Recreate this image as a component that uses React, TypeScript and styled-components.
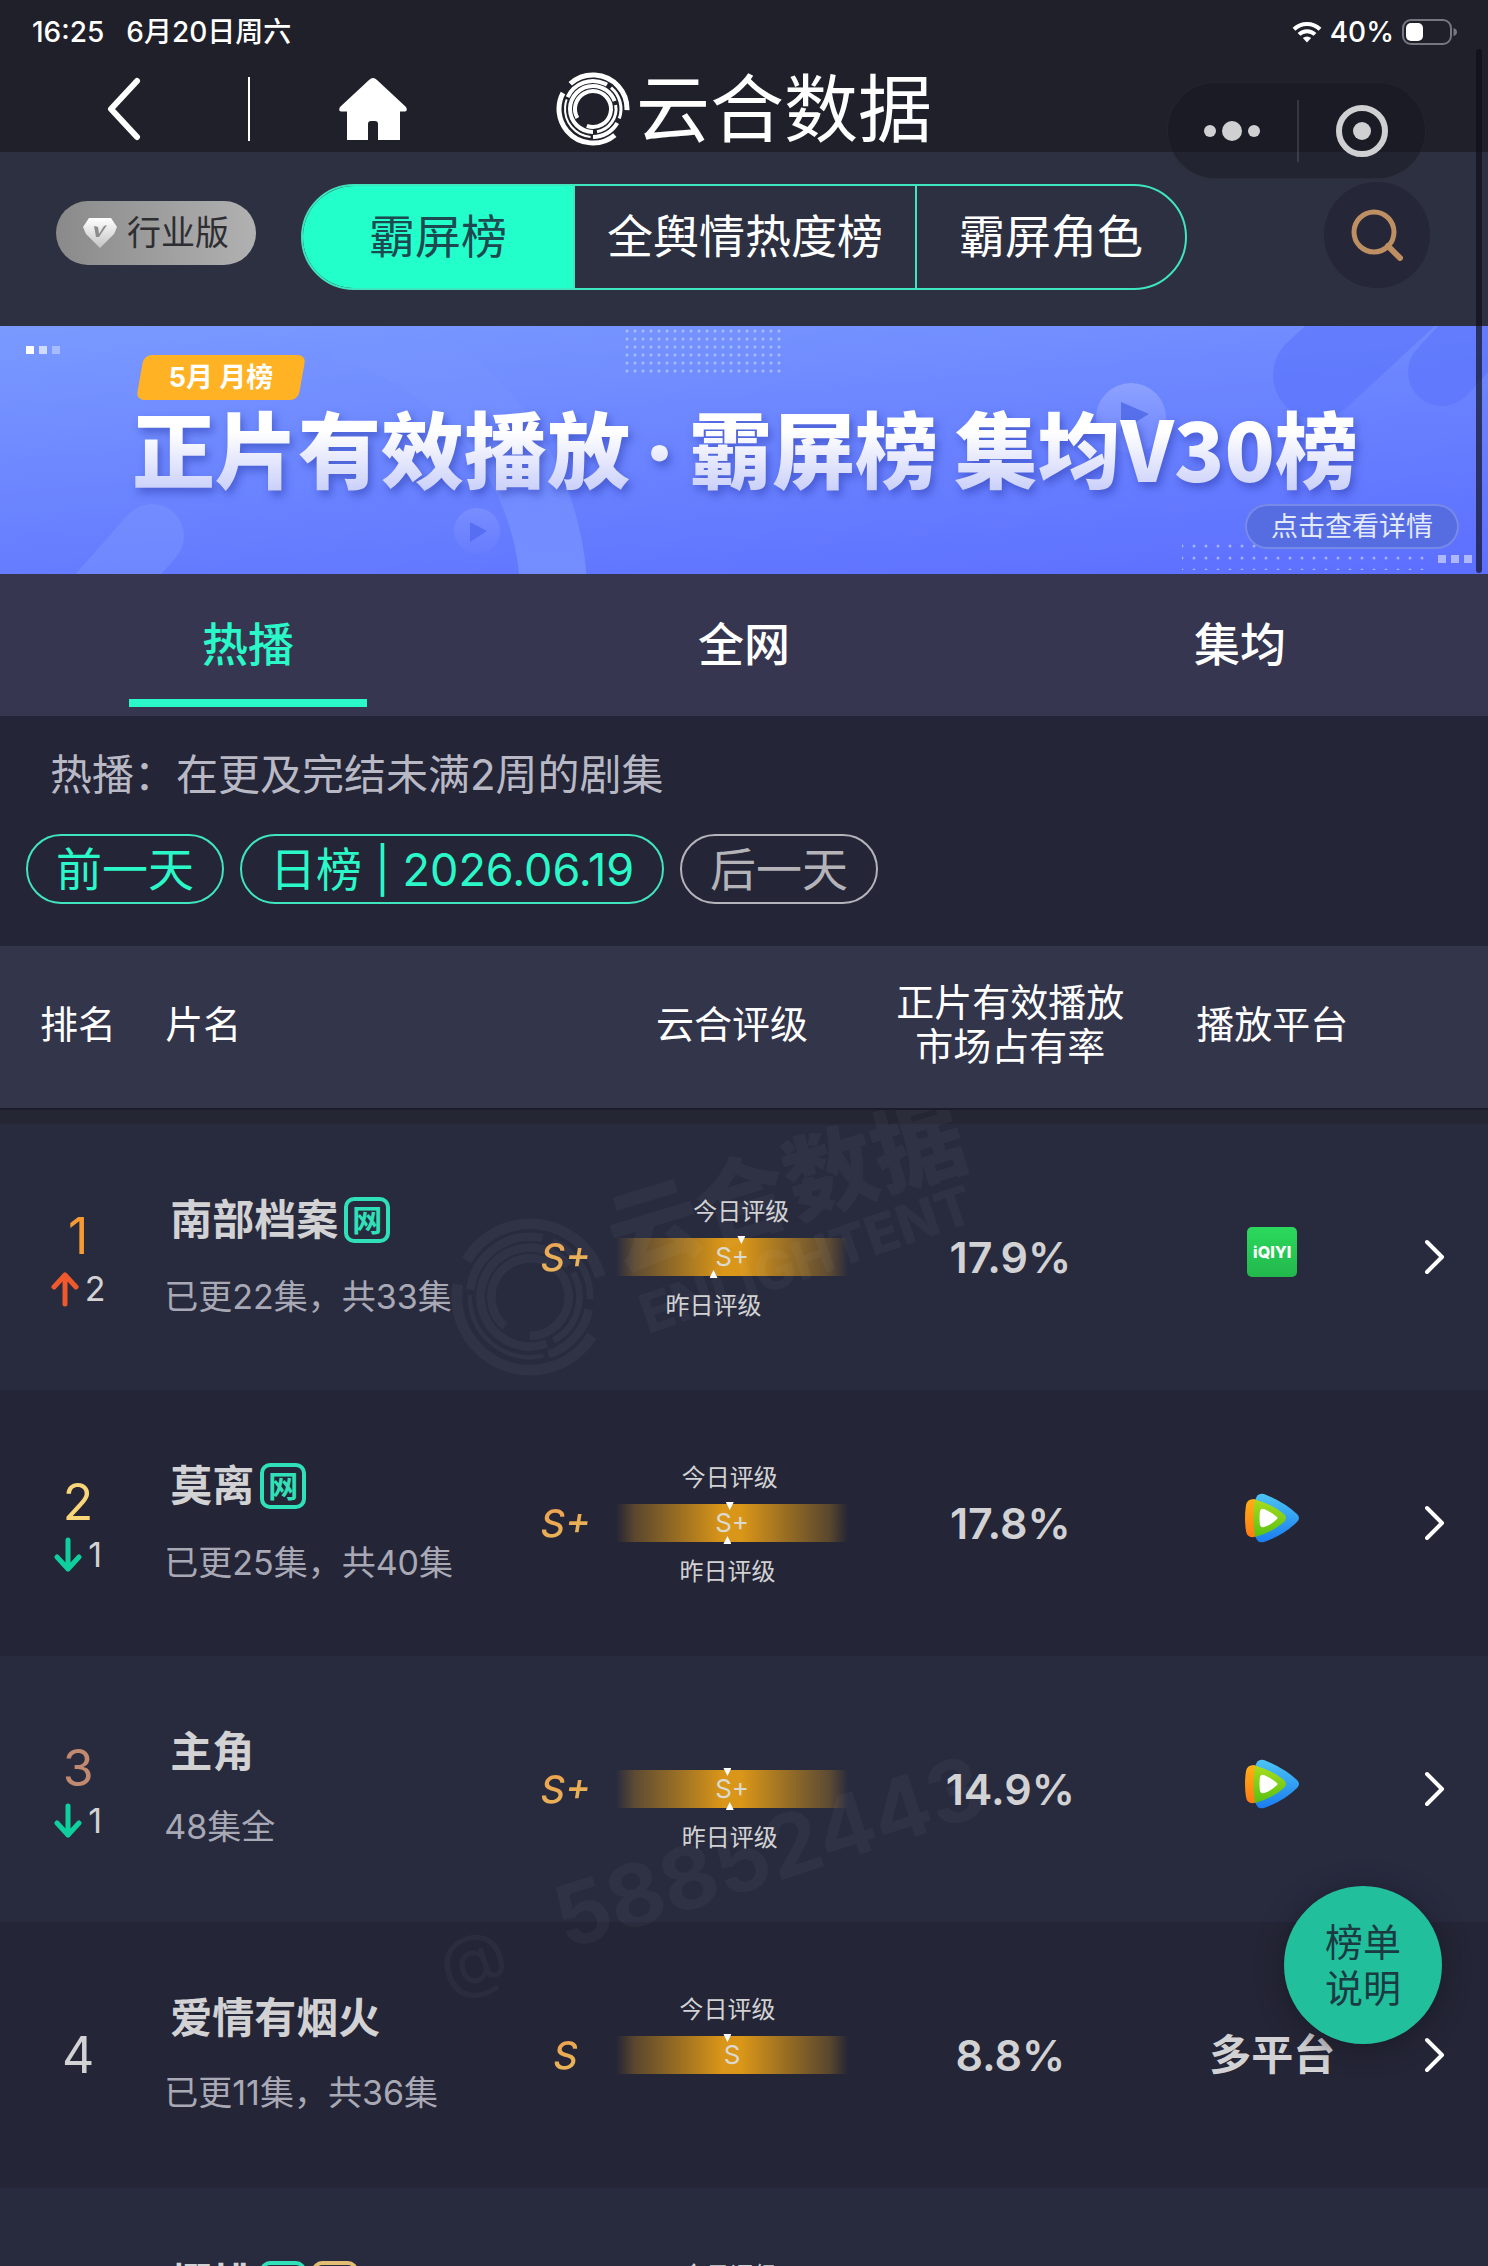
import React from "react";
import styled, { createGlobalStyle, css } from "styled-components";

const color = {
  bar: "#1f2029",
  tool: "#2d3040",
  tabs: "#363650",
  base: "#242536",
  rowLight: "#282b3e",
  head: "#33354b",
  mint: "#2bf8c8",
  mintLine: "#3fe5bd",
  text: "#d2d2d4",
  muted: "#a9a9b6",
};

const latinCjk = `"Inter", "Noto Sans CJK SC", sans-serif`;

const GlobalStyle = createGlobalStyle`
  *, *::before, *::after { box-sizing: border-box; }
  body { margin: 0; background: ${color.base}; font-family: ${latinCjk}; }
  button { margin: 0; padding: 0; border: 0; background: none; color: inherit; font: inherit; cursor: pointer; }
  h1, h2, h3, p { margin: 0; font-weight: 400; }
  svg { display: block; flex: none; }
`;

const Page = styled.div`
  position: relative;
  height: 100vh;
  overflow: hidden;
  background: ${color.base};
  color: #fff;
`;

/* ---------- status bar and header ---------- */

const StatusBar = styled.div`
  display: flex;
  justify-content: space-between;
  align-items: center;
  height: 62px;
  padding: 2px 30px 0 32px;
  background: ${color.bar};
  font-size: 28px;
  line-height: 40px;
  font-weight: 500;
`;

const StatusGroup = styled.div<{ $gap: number }>`
  display: flex;
  align-items: center;
  gap: ${(p) => p.$gap}px;
`;

const Header = styled.header`
  display: grid;
  grid-template-columns: 1fr 1fr 2fr 2fr;
  align-items: center;
  height: 90px;
  padding-top: 4px;
  background: ${color.bar};
`;

const HeaderButton = styled.button<{ $divided?: boolean }>`
  display: flex;
  align-items: center;
  justify-content: center;
  height: 64px;
  ${(p) => p.$divided && css`border-left: 2px solid #fff;`}
`;

const Brand = styled.h1`
  display: flex;
  align-items: center;
  justify-content: center;
  gap: 6px;
  font-size: 74px;
  line-height: 86px;
  white-space: nowrap;
`;

const Capsule = styled.div`
  position: absolute;
  top: 82px;
  right: 62px;
  z-index: 3;
  display: grid;
  grid-template-columns: 1fr 1fr;
  align-items: center;
  width: 259px;
  height: 97px;
  border: 1px solid rgba(255, 255, 255, 0.04);
  border-radius: 49px;
  background: rgba(20, 20, 30, 0.4);
`;

const CapsuleButton = styled.button<{ $divided?: boolean }>`
  display: flex;
  align-items: center;
  justify-content: center;
  height: 62px;
  ${(p) => p.$divided && css`border-left: 2px solid rgba(255, 255, 255, 0.12);`}
`;

const ScrollThumb = styled.div`
  position: absolute;
  top: 49px;
  right: 6px;
  z-index: 4;
  width: 6px;
  height: 524px;
  border-radius: 3px;
  background: rgba(12, 12, 20, 0.66);
`;

/* ---------- toolbar ---------- */

const Toolbar = styled.div`
  display: flex;
  align-items: center;
  height: 174px;
  padding: 0 58px 4px 56px;
  background: ${color.tool};
`;

const EditionButton = styled.button`
  display: flex;
  align-items: center;
  justify-content: center;
  gap: 10px;
  width: 200px;
  height: 64px;
  margin: 0 45px 8px 0;
  border-radius: 32px;
  background: linear-gradient(90deg, #8a8a8b, #b1b1b2);
  color: #2e2e32;
  font-size: 34px;
  line-height: 48px;
`;

const Segments = styled.div`
  display: grid;
  grid-template-columns: 270fr 342fr 270fr;
  flex: 0 1 886px;
  height: 106px;
  overflow: hidden;
  border: 2px solid ${color.mintLine};
  border-radius: 53px;
`;

const Segment = styled.button<{ $active?: boolean }>`
  padding-bottom: 2px;
  background: ${(p) => (p.$active ? "#22ffcb" : "transparent")};
  color: ${(p) => (p.$active ? "#1c4a50" : "#fff")};
  font-size: 46px;
  line-height: 64px;
  white-space: nowrap;
  & + & { border-left: 2px solid ${color.mintLine}; }
`;

const SearchButton = styled.button`
  display: flex;
  align-items: center;
  justify-content: center;
  width: 106px;
  height: 106px;
  margin: 0 0 4px auto;
  border-radius: 50%;
  background: #252637;
`;

/* ---------- banner ---------- */

const Banner = styled.section`
  position: relative;
  display: flex;
  flex-direction: column;
  align-items: flex-start;
  height: 248px;
  padding: 29px 29px 0 132px;
  overflow: hidden;
  background: linear-gradient(175deg, #7a9aff 0%, #6a83ff 50%, #5c6eff 100%);
`;

const BannerArt = styled.svg`
  position: absolute;
  inset: 0;
  width: 100%;
  height: 100%;
`;

const MonthBadge = styled.div`
  position: relative;
  display: flex;
  align-items: center;
  justify-content: center;
  width: 162px;
  height: 45px;
  margin-left: 8px;
  font-size: 27px;
  line-height: 36px;
  font-weight: 700;
  &::before {
    content: "";
    position: absolute;
    inset: 0;
    border-radius: 8px;
    background: #ffb224;
    transform: skewX(-10deg);
  }
  & > span { position: relative; }
`;

const BannerTitle = styled.h2`
  position: relative;
  height: 106px;
  padding-top: 4px;
  font-size: 83px;
  line-height: 96px;
  font-weight: 900;
  white-space: nowrap;
  background: linear-gradient(180deg, #ffffff 30%, #c6ccfa 90%);
  background-clip: text;
  -webkit-background-clip: text;
  color: transparent;
  filter: drop-shadow(3px 5px 4px rgba(40, 55, 170, 0.5));
`;

const TitleDot = styled.span`
  padding: 0 14px;
`;

const TitleLatin = styled.span`
  font-family: "Noto Sans CJK SC", sans-serif;
  line-height: 1;
`;

const DetailLink = styled.a`
  position: relative;
  display: flex;
  align-items: center;
  justify-content: center;
  align-self: flex-end;
  width: 214px;
  height: 45px;
  margin-top: -2px;
  border: 2px solid rgba(255, 255, 255, 0.2);
  border-radius: 23px;
  background: #566de2;
  color: #e3e9ff;
  font-size: 27px;
  line-height: 36px;
  text-decoration: none;
`;

/* ---------- tabs and filters ---------- */

const Tabs = styled.nav`
  display: grid;
  grid-template-columns: repeat(3, 1fr);
  height: 142px;
  background: ${color.tabs};
`;

const Tab = styled.button<{ $active?: boolean }>`
  display: flex;
  flex-direction: column;
  align-items: center;
  justify-content: space-between;
  padding: 37px 0 9px;
  color: ${(p) => (p.$active ? color.mint : "#fff")};
  font-size: 46px;
  line-height: 66px;
  font-weight: 500;
  &::after {
    content: "";
    width: 48%;
    height: 8px;
    background: ${(p) => (p.$active ? color.mint : "transparent")};
  }
`;

const Filters = styled.section`
  height: 230px;
  padding: 28px 26px 0;
`;

const Hint = styled.p`
  padding-left: 24px;
  color: #b9b9c6;
  font-size: 42px;
  line-height: 62px;
`;

const DateRow = styled.div`
  display: flex;
  gap: 16px;
  margin-top: 28px;
`;

const DateButton = styled.button<{ $muted?: boolean }>`
  height: 70px;
  padding: 0 28px;
  border: 2px solid ${(p) => (p.$muted ? "#b4b4bc" : color.mintLine)};
  border-radius: 35px;
  color: ${(p) => (p.$muted ? "#b4b4b8" : color.mint)};
  font-size: 46px;
  line-height: 64px;
  white-space: nowrap;
`;

const DateText = styled.span`
  font-size: 45px;
`;

/* ---------- ranking table ---------- */

const Board = styled.section`
  position: relative;
`;

const Table = styled.table`
  width: 100%;
  table-layout: fixed;
  border-spacing: 0;
`;

const HeadCell = styled.th<{ $left?: boolean }>`
  height: 178px;
  padding: 0 0 8px ${(p) => (p.$left ? 9 : 0)}px;
  border-bottom: 14px solid #252633;
  background: ${color.head};
  box-shadow: inset 0 -2px #1b1c2a;
  font-size: 38px;
  line-height: 44px;
  font-weight: 400;
  text-align: ${(p) => (p.$left ? "left" : "center")};
  white-space: nowrap;
`;

const Row = styled.tr`
  height: 266px;
  background: ${color.base};
  &:nth-child(odd) { background: ${color.rowLight}; }
`;

const Cell = styled.td`
  padding: 0;
  text-align: center;
  vertical-align: middle;
`;

const RankCell = styled(Cell)<{ $shifted: boolean }>`
  padding-top: ${(p) => (p.$shifted ? 8 : 0)}px;
`;

const NameCell = styled(Cell)`
  padding: 4px 0 0 8px;
  text-align: left;
`;

const Rank = styled.div<{ $tone: string }>`
  color: ${(p) => p.$tone};
  font-size: 50px;
  line-height: 56px;
`;

const Shift = styled.div`
  display: flex;
  align-items: center;
  justify-content: center;
  gap: 6px;
  color: ${color.text};
  font-size: 34px;
  line-height: 50px;
`;

const ShowTitle = styled.h3`
  display: flex;
  align-items: center;
  gap: 6px;
  padding-left: 6px;
  color: ${color.text};
  font-size: 42px;
  line-height: 42px;
  font-weight: 700;
  white-space: nowrap;
`;

const Tag = styled.span<{ $tone: string }>`
  display: flex;
  align-items: center;
  justify-content: center;
  width: 46px;
  height: 46px;
  border: 4px solid ${(p) => p.$tone};
  border-radius: 10px;
  color: ${(p) => p.$tone};
  font-size: 30px;
  line-height: 38px;
  font-weight: 700;
`;

const Episodes = styled.p`
  margin-top: 30px;
  color: ${color.muted};
  font-size: 34px;
  line-height: 48px;
  white-space: nowrap;
`;

const Grade = styled.span`
  background: linear-gradient(160deg, #ee9d4c, #e6bb5c);
  background-clip: text;
  -webkit-background-clip: text;
  color: transparent;
  font-size: 38px;
  line-height: 48px;
  font-style: italic;
  font-weight: 500;
`;

const Meter = styled.div`
  position: relative;
  width: 232px;
  height: 38px;
  margin: 0 auto;
  background: linear-gradient(
    90deg,
    rgba(214, 148, 24, 0) 0%,
    rgba(214, 148, 24, 0.3) 8%,
    rgba(214, 148, 24, 0.68) 28%,
    rgb(218, 150, 24) 46%,
    rgb(218, 150, 24) 54%,
    rgba(214, 148, 24, 0.68) 72%,
    rgba(214, 148, 24, 0.3) 92%,
    rgba(214, 148, 24, 0) 100%
  );
  color: #dcd9cf;
  font-size: 26px;
  line-height: 38px;
`;

const Marker = styled.div<{ $below?: boolean }>`
  position: absolute;
  ${(p) => (p.$below ? "top: 32px;" : "bottom: 32px;")}
  display: flex;
  flex-direction: ${(p) => (p.$below ? "column" : "column-reverse")};
  align-items: center;
  gap: ${(p) => (p.$below ? 10 : 6)}px;
  transform: translateX(-50%);
  color: ${color.text};
  font-size: 24px;
  line-height: 36px;
  white-space: nowrap;
  &::before {
    content: "";
    width: 8px;
    height: 8px;
    background: #fff;
    clip-path: ${(p) => (p.$below ? "polygon(50% 0, 100% 100%, 0 100%)" : "polygon(0 0, 100% 0, 50% 100%)")};
  }
`;

const Share = styled.span`
  color: ${color.text};
  font-size: 43px;
  line-height: 50px;
  font-weight: 600;
`;

const PlatformSlot = styled.div`
  display: flex;
  justify-content: center;
  padding-bottom: 10px;
`;

const PlatformText = styled.span`
  color: ${color.text};
  font-size: 42px;
  line-height: 50px;
  font-weight: 700;
`;

const IqiyiTile = styled.div`
  width: 50px;
  height: 50px;
  border-radius: 5px;
  background: linear-gradient(180deg, #2bd95c, #22b74c);
  color: #fff;
  font-size: 16px;
  line-height: 50px;
  font-weight: 800;
`;

const RowButton = styled.button`
  display: flex;
  align-items: center;
  justify-content: center;
  width: 100%;
  height: 80px;
  padding-right: 4px;
`;

const Watermark = styled.svg`
  position: absolute;
  top: 164px;
  left: 400px;
  pointer-events: none;
`;

const HelpButton = styled.button`
  position: absolute;
  right: 46px;
  top: 1886px;
  z-index: 2;
  width: 158px;
  height: 158px;
  border-radius: 50%;
  background: #22bf9c;
  box-shadow: 0 4px 26px rgba(20, 20, 34, 0.6);
  color: #1a3b42;
  font-size: 38px;
  line-height: 46px;
`;

/* ---------- drawings ---------- */

type RingArc = { r: number; w: number; from: number; len: number };

const ringArcs: RingArc[] = [
  { r: 34, w: 5, from: 228, len: 134 },
  { r: 34, w: 5, from: 50, len: 158 },
  { r: 28, w: 4, from: 205, len: 95 },
  { r: 28, w: 3, from: 310, len: 70 },
  { r: 28, w: 4, from: 30, len: 60 },
  { r: 28, w: 2, from: 95, len: 105 },
  { r: 23, w: 4, from: 90, len: 250 },
  { r: 23, w: 3, from: 350, len: 90 },
  { r: 18, w: 4, from: 150, len: 320 },
];

const Rings = () => (
  <g fill="none" stroke="currentColor">
    {ringArcs.map((a, i) => (
      <circle
        key={i}
        cx="37"
        cy="37"
        r={a.r}
        strokeWidth={a.w}
        pathLength={360}
        strokeDasharray={`${a.len} ${360 - a.len}`}
        transform={`rotate(${a.from} 37 37)`}
      />
    ))}
  </g>
);

const WifiIcon = () => (
  <svg width="30" height="22" viewBox="0 0 30 22" fill="none" stroke="#fff" strokeWidth="4">
    <path d="M2 8.2a18.6 18.6 0 0 1 26 0" />
    <path d="M7 13.4a11.5 11.5 0 0 1 16 0" />
    <path d="M15 21.5l-4.2-4.4a6 6 0 0 1 8.400 0z" fill="#fff" stroke="none" />
  </svg>
);

const BatteryIcon = () => (
  <svg width="56" height="26" viewBox="0 0 56 26">
    <rect x="1" y="1" width="48" height="24" rx="8" fill="none" stroke="#77777f" strokeWidth="2" />
    <rect x="4" y="4" width="17" height="18" rx="5" fill="#fff" />
    <path d="M51.500 9q3.500 1 3.500 4t-3.500 4z" fill="#77777f" />
  </svg>
);

const BackIcon = () => (
  <svg width="36" height="64" viewBox="0 0 36 64" fill="none" stroke="#fff" strokeWidth="6" strokeLinecap="round">
    <path d="M31 4L5 32l26 28" strokeLinejoin="round" />
  </svg>
);

const HomeIcon = () => (
  <svg width="68" height="62" viewBox="0 0 68 62" fill="#fff">
    <path d="M34 0q2 0 4 2l29 27q2 4-1 4.500h-5V62H39V46q0-3-3-3h-4q-3 0-3 3v16H8V33.500H2Q-1 33 1 29L30 2q2-2 4-2z" />
  </svg>
);

const GemIcon = () => (
  <svg width="34" height="32" viewBox="0 0 34 32">
    <defs>
      <linearGradient id="gem" x1="0" y1="0" x2="0" y2="1">
        <stop offset="0" stopColor="#fff" />
        <stop offset="1" stopColor="#c4c4c4" />
      </linearGradient>
    </defs>
    <path d="M6 1h22l6 9-3 7-14 14L3 17 0 10z" fill="url(#gem)" />
    <path d="M11 9l4 1 1 7 5-8 3-1-8 12h-3z" fill="#8b8b8b" />
  </svg>
);

const SearchIcon = () => (
  <svg width="52" height="52" viewBox="0 0 52 52" fill="none" stroke="#bd8f63" strokeWidth="5">
    <circle cx="23" cy="23" r="20" />
    <path d="M37 37l12 12" strokeLinecap="round" strokeWidth="6" />
  </svg>
);

const ArrowIcon = ({ up }: { up: boolean }) => (
  <svg
    width="28"
    height="36"
    viewBox="0 0 28 36"
    fill="none"
    stroke={up ? "#f0592c" : "#10cf9f"}
    strokeWidth="5"
    strokeLinecap="round"
    strokeLinejoin="round"
  >
    <path d={up ? "M14 33V4M3 16L14 4l11 12" : "M14 3v29M3 20l11 12 11-12"} />
  </svg>
);

const TencentIcon = () => (
  <svg width="54" height="50" viewBox="0 0 54 50">
    <defs>
      <linearGradient id="tvBlue" x1="0" y1="0" x2="0" y2="1">
        <stop offset="0" stopColor="#4cc4f4" />
        <stop offset="1" stopColor="#1a7cf0" />
      </linearGradient>
      <linearGradient id="tvOrange" x1="0" y1="0" x2="0" y2="1">
        <stop offset="0" stopColor="#ffb014" />
        <stop offset="1" stopColor="#ff7a14" />
      </linearGradient>
      <linearGradient id="tvGreen" x1="0" y1="0" x2="0" y2="1">
        <stop offset="0" stopColor="#a8dc1c" />
        <stop offset="1" stopColor="#58c012" />
      </linearGradient>
    </defs>
    <path d="M10 8q2-9 9-7 20 8 33 20 4 4 0 8-13 13-33 20-7 2-9-7-3-17 0-34z" fill="url(#tvBlue)" />
    <path d="M1 12q1-6 8-6 8 3 12 7v24q-4 5-12 7-7 1-8-6-2-13 0-26z" fill="url(#tvOrange)" />
    <path d="M10 7q16 3 29 14 4 4 0 8-13 11-29 15-3-19 0-37z" fill="url(#tvGreen)" />
    <path d="M15 18q1-3 4-2 7 3 13 8 1 1 0 2-6 6-13 8-3 1-4-2-1-7 0-14z" fill="#fff" />
  </svg>
);

const ChevronIcon = () => (
  <svg width="20" height="36" viewBox="0 0 20 36" fill="none" stroke="#fff" strokeWidth="4" strokeLinecap="round" strokeLinejoin="round">
    <path d="M2 3l15 15L2 33" />
  </svg>
);

const BannerDrawing = () => (
  <BannerArt viewBox="0 0 1488 248" preserveAspectRatio="xMidYMid slice" aria-hidden="true">
    <defs>
      <pattern id="dotsFine" width="8" height="8" patternUnits="userSpaceOnUse">
        <circle cx="3" cy="5" r="1.500" fill="#a9bcff" />
      </pattern>
      <pattern id="dotsWide" width="12" height="12" patternUnits="userSpaceOnUse">
        <circle cx="6" cy="4" r="1.500" fill="#a3b1ff" />
      </pattern>
      <linearGradient id="ringFade" gradientUnits="userSpaceOnUse" x1="0" y1="0" x2="0" y2="248">
        <stop offset="0" stopColor="#8fb0ff" stopOpacity="0" />
        <stop offset="0.400" stopColor="#8fb0ff" stopOpacity="0.12" />
        <stop offset="0.750" stopColor="#86a4ff" stopOpacity="0.38" />
        <stop offset="1" stopColor="#86a4ff" stopOpacity="0.5" />
      </linearGradient>
      <linearGradient id="ballFade" x1="0" y1="0" x2="0" y2="1">
        <stop offset="0" stopColor="#fff" stopOpacity="0.22" />
        <stop offset="1" stopColor="#fff" stopOpacity="0.04" />
      </linearGradient>
    </defs>
    <path d="M340 0A282 282 0 0 1 554 274" fill="none" stroke="url(#ringFade)" strokeWidth="67" />
    <path d="M152 210L60 314" stroke="#7f9bff" strokeOpacity="0.400" strokeWidth="64" strokeLinecap="round" />
    <path d="M1317 49l120-111" stroke="#5a73fb" strokeOpacity="0.600" strokeWidth="88" strokeLinecap="round" />
    <path d="M1442 46l120-130" stroke="#5a73fb" strokeOpacity="0.600" strokeWidth="68" strokeLinecap="round" />
    <circle cx="1131" cy="92" r="35" fill="url(#ballFade)" />
    <path d="M1121 76l28 12-28 17z" fill="#5670ec" />
    <g opacity="0.500">
      <circle cx="477" cy="205" r="23" fill="url(#ballFade)" />
      <path d="M470 196l17 9-17 11z" fill="#4a60e8" />
    </g>
    <rect x="624" y="0" width="160" height="48" fill="url(#dotsFine)" />
    <rect x="1182" y="212" width="244" height="32" fill="url(#dotsWide)" />
    <g fill="#fff">
      <rect x="26" y="20" width="8" height="8" />
      <rect x="39" y="20" width="8" height="8" opacity="0.650" />
      <rect x="52" y="20" width="8" height="8" opacity="0.350" />
      <rect x="1438" y="229" width="8" height="8" opacity="0.500" />
      <rect x="1451" y="229" width="8" height="8" opacity="0.500" />
      <rect x="1464" y="229" width="8" height="8" opacity="0.500" />
    </g>
  </BannerArt>
);

/* ---------- data ---------- */

type Mark = { at: number; label?: string };

type Show = {
  rank: number;
  tone: string;
  shift?: { up: boolean; by: number };
  name: string;
  tags: { text: string; tone: string }[];
  episodes: string;
  grade: string;
  today?: Mark;
  yesterday?: Mark;
  share: string;
  platform: "iqiyi" | "tencent" | "multi";
};

const webTag = { text: "网", tone: "#2fe0b8" };

const shows: Show[] = [
  {
    rank: 1, tone: "#f59a35", shift: { up: true, by: 2 }, name: "南部档案", tags: [webTag],
    episodes: "已更22集，共33集", grade: "S+", today: { at: 54, label: "今日评级" },
    yesterday: { at: 42, label: "昨日评级" }, share: "17.9%", platform: "iqiyi",
  },
  {
    rank: 2, tone: "#f9d67a", shift: { up: false, by: 1 }, name: "莫离", tags: [webTag],
    episodes: "已更25集，共40集", grade: "S+", today: { at: 49, label: "今日评级" },
    yesterday: { at: 48, label: "昨日评级" }, share: "17.8%", platform: "tencent",
  },
  {
    rank: 3, tone: "#c18a70", shift: { up: false, by: 1 }, name: "主角", tags: [],
    episodes: "48集全", grade: "S+", today: { at: 48 },
    yesterday: { at: 49, label: "昨日评级" }, share: "14.9%", platform: "tencent",
  },
  {
    rank: 4, tone: "#d2d2d4", name: "爱情有烟火", tags: [],
    episodes: "已更11集，共36集", grade: "S", today: { at: 48, label: "今日评级" },
    share: "8.8%", platform: "multi",
  },
  {
    rank: 5, tone: "#d2d2d4", name: "樱桃", tags: [webTag, { text: "独", tone: "#e3bd72" }],
    episodes: "已更20集，共30集", grade: "S", today: { at: 49, label: "今日评级" },
    share: "6.5%", platform: "tencent",
  },
];

const columns = ["10.5%", "25%", "5%", "17.4%", "20%", "15.2%", "6.9%"];

const Platform = ({ kind }: { kind: Show["platform"] }) => {
  if (kind === "multi") return <PlatformText>多平台</PlatformText>;
  return <PlatformSlot>{kind === "iqiyi" ? <IqiyiTile>iQIYI</IqiyiTile> : <TencentIcon />}</PlatformSlot>;
};

const ShowRow = ({ show }: { show: Show }) => (
  <Row>
    <RankCell $shifted={!!show.shift}>
      <Rank $tone={show.tone}>{show.rank}</Rank>
      {show.shift && (
        <Shift>
          <ArrowIcon up={show.shift.up} />
          {show.shift.by}
        </Shift>
      )}
    </RankCell>
    <NameCell>
      <ShowTitle>
        {show.name}
        {show.tags.map((t) => (
          <Tag key={t.text} $tone={t.tone}>{t.text}</Tag>
        ))}
      </ShowTitle>
      <Episodes>{show.episodes}</Episodes>
    </NameCell>
    <Cell><Grade>{show.grade}</Grade></Cell>
    <Cell>
      <Meter>
        {show.grade}
        {show.today && <Marker style={{ left: `${show.today.at}%` }}>{show.today.label}</Marker>}
        {show.yesterday && <Marker $below style={{ left: `${show.yesterday.at}%` }}>{show.yesterday.label}</Marker>}
      </Meter>
    </Cell>
    <Cell><Share>{show.share}</Share></Cell>
    <Cell><Platform kind={show.platform} /></Cell>
    <Cell>
      <RowButton aria-label={show.name}><ChevronIcon /></RowButton>
    </Cell>
  </Row>
);

export default function App() {
  return (
    <Page>
      <GlobalStyle />
      <StatusBar>
        <StatusGroup $gap={22}>
          <span>16:25</span>
          <span>6月20日周六</span>
        </StatusGroup>
        <StatusGroup $gap={8}>
          <WifiIcon />
          <span>40%</span>
          <BatteryIcon />
        </StatusGroup>
      </StatusBar>

      <Header>
        <HeaderButton aria-label="返回"><BackIcon /></HeaderButton>
        <HeaderButton $divided aria-label="首页"><HomeIcon /></HeaderButton>
        <Brand>
          <svg width="74" height="74" viewBox="0 0 74 74" aria-hidden="true"><Rings /></svg>
          云合数据
        </Brand>
      </Header>

      <Capsule>
        <CapsuleButton aria-label="更多">
          <svg width="58" height="20" viewBox="0 0 58 20" fill="#d0d0d3">
            <circle cx="7" cy="10" r="6" />
            <circle cx="29" cy="10" r="10" />
            <circle cx="51" cy="10" r="6" />
          </svg>
        </CapsuleButton>
        <CapsuleButton $divided aria-label="关闭">
          <svg width="52" height="52" viewBox="0 0 52 52">
            <circle cx="26" cy="26" r="23" fill="none" stroke="#d0d0d3" strokeWidth="6" />
            <circle cx="26" cy="26" r="9" fill="#d0d0d3" />
          </svg>
        </CapsuleButton>
      </Capsule>
      <ScrollThumb />

      <Toolbar>
        <EditionButton><GemIcon />行业版</EditionButton>
        <Segments>
          <Segment $active>霸屏榜</Segment>
          <Segment>全舆情热度榜</Segment>
          <Segment>霸屏角色</Segment>
        </Segments>
        <SearchButton aria-label="搜索"><SearchIcon /></SearchButton>
      </Toolbar>

      <Banner>
        <BannerDrawing />
        <MonthBadge><span>5月 月榜</span></MonthBadge>
        <BannerTitle>
          正片有效播放<TitleDot>·</TitleDot>霸屏榜 集均<TitleLatin>V30</TitleLatin>榜
        </BannerTitle>
        <DetailLink href="#detail">点击查看详情</DetailLink>
      </Banner>

      <Tabs>
        <Tab $active>热播</Tab>
        <Tab>全网</Tab>
        <Tab>集均</Tab>
      </Tabs>

      <Filters>
        <Hint>热播：在更及完结未满2周的剧集</Hint>
        <DateRow>
          <DateButton>前一天</DateButton>
          <DateButton>日榜 <DateText>| 2026.06.19</DateText></DateButton>
          <DateButton $muted>后一天</DateButton>
        </DateRow>
      </Filters>

      <Board>
        <Table>
          <colgroup>
            {columns.map((w, i) => <col key={i} style={{ width: w }} />)}
          </colgroup>
          <thead>
            <tr>
              <HeadCell>排名</HeadCell>
              <HeadCell $left>片名</HeadCell>
              <HeadCell />
              <HeadCell>云合评级</HeadCell>
              <HeadCell>正片有效播放<br />市场占有率</HeadCell>
              <HeadCell>播放平台</HeadCell>
              <HeadCell />
            </tr>
          </thead>
          <tbody>
            {shows.map((s) => <ShowRow key={s.rank} show={s} />)}
          </tbody>
        </Table>
        <Watermark width="640" height="940" viewBox="400 1110 640 940" fill="#fff" fillOpacity="0.034" aria-hidden="true">
          <g color="#fff" opacity="0.034" transform="translate(530 1297) rotate(-18) scale(2.150) translate(-37 -37)">
            <Rings />
          </g>
          <text transform="translate(620 1272) rotate(-17)" fontFamily="Noto Sans CJK SC, sans-serif" fontWeight="900" fontSize="92">云合数据</text>
          <text transform="translate(648 1334) rotate(-19)" fontFamily="Inter, sans-serif" fontWeight="800" fontSize="54">ENLIGHTENT</text>
          <text transform="translate(448 1994) rotate(-18)" fontFamily="Inter, sans-serif" fontWeight="400" fontSize="70">@</text>
          <text transform="translate(566 1950) rotate(-18)" fontFamily="Inter, sans-serif" fontWeight="700" fontSize="86">58852443</text>
        </Watermark>
      </Board>

      <HelpButton>榜单<br />说明</HelpButton>
    </Page>
  );
}
